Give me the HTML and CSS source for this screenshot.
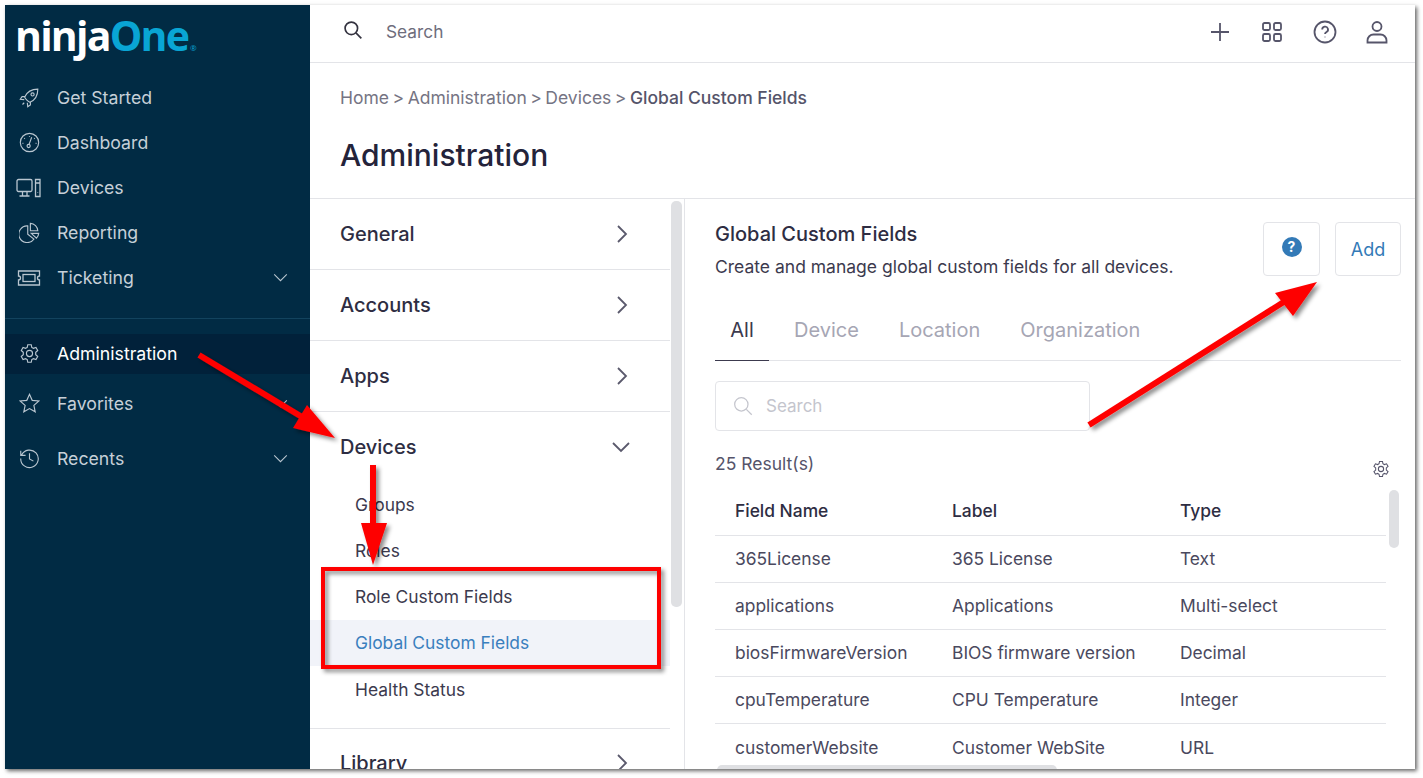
FILE: index.html
```html
<!DOCTYPE html>
<html lang="en">
<head>
    <meta charset="UTF-8">
    <title>Global Custom Fields</title>
    <link rel="stylesheet" href="styles.css">
</head>
<body>
    <div class="window">
        <aside class="sidebar">
            <div class="logo"><span class="logo-ninja">ninja</span><span class="logo-one">One</span><span class="logo-reg">®</span></div>
            <nav class="side-nav">
                <a class="side-item">
                    <svg class="side-icon" viewBox="0 0 24 24"><path d="M9 15c-1-1-2-2-2.500-3.500C9 6 14 2.500 21.500 2.500 21.500 10 18 15 12.500 17.500 11 17 10 16 9 15z"/><circle cx="15.500" cy="8.500" r="1.800"/><path d="M7 11H3.500L1.500 14l4.500.5M13 17v3.500l-3 2-.5-4.500M6 18l-2 2"/></svg>
                    <span>Get Started</span>
                </a>
                <a class="side-item">
                    <svg class="side-icon" viewBox="0 0 24 24"><circle cx="12" cy="12" r="10.500"/><circle cx="11" cy="16" r="1.800"/><path d="M11.500 14.200l3-8.200M12 4.500v1M6 7l.7.7M4 13h1M19 13h1M18 7l-.7.7"/></svg>
                    <span>Dashboard</span>
                </a>
                <a class="side-item">
                    <svg class="side-icon side-icon-wide" viewBox="0 0 26 20"><rect x="1" y="1.500" width="15" height="12" rx="1.500"/><path d="M6.500 13.500v4M11 13.500v4M3.500 18h10M19.500 1.500h4.500v17h-4.500zM19.500 5h4.500M21.700 14.500v.5"/></svg>
                    <span>Devices</span>
                </a>
                <a class="side-item">
                    <svg class="side-icon" viewBox="0 0 24 24"><path d="M10 4.500a9.500 9.500 0 1 0 7 15l-7-5.500z"/><path d="M13 1.500a9 9 0 0 1 8.500 8.500H13z"/><path d="M14 13h8.500a9 9 0 0 1-2.500 5.500z"/></svg>
                    <span>Reporting</span>
                </a>
                <a class="side-item">
                    <svg class="side-icon side-icon-wide" viewBox="0 0 26 20"><path d="M2.500 3h21v5a2 2 0 0 0 0 4v5h-21v-5a2 2 0 0 0 0-4z"/><rect x="7" y="6.500" width="12" height="7"/></svg>
                    <span>Ticketing</span>
                    <svg class="side-caret" viewBox="0 0 16 10"><path d="M1 1.500l7 7 7-7"/></svg>
                </a>
            </nav>
            <div class="side-divider"></div>
            <a class="side-item side-item-active">
                <svg class="side-icon" viewBox="0 0 24 24"><path d="M10 2h4l.6 3 1.900 1.100 2.900-1 2 3.500-2.300 2v2.800l2.300 2-2 3.500-2.900-1-1.900 1.100-.6 3h-4l-.6-3-1.900-1.100-2.900 1-2-3.500 2.300-2v-2.800l-2.300-2 2-3.500 2.900 1L9.400 5z"/><circle cx="12" cy="12" r="3.500"/></svg>
                <span>Administration</span>
            </a>
            <a class="side-item side-item-fav">
                <svg class="side-icon" viewBox="0 0 24 24"><path d="M12 1.500l3.100 6.900 7.400.8-5.500 5 1.500 7.300-6.500-3.700-6.500 3.700 1.500-7.300-5.500-5 7.400-.8z"/></svg>
                <span>Favorites</span>
                <svg class="side-caret" viewBox="0 0 16 10"><path d="M1 1.500l7 7 7-7"/></svg>
            </a>
            <a class="side-item side-item-recent">
                <svg class="side-icon" viewBox="0 0 24 24"><path d="M3 8A10 10 0 1 1 2 12M2 3V8.500H7.500M12 6V12.500l4.500 2.500"/></svg>
                <span>Recents</span>
                <svg class="side-caret" viewBox="0 0 16 10"><path d="M1 1.500l7 7 7-7"/></svg>
            </a>
        </aside>

        <main class="main">
            <header class="topbar">
                <svg class="top-search" viewBox="0 0 24 24"><circle cx="10" cy="10" r="7.500"/><path d="M15.500 15.500L22 22"/></svg>
                <span class="top-search-text">Search</span>
                <div class="top-icons">
                    <svg class="top-icon" viewBox="0 0 24 24"><path d="M12 3v18M3 12h18"/></svg>
                    <svg class="top-icon" viewBox="0 0 24 24"><rect x="3" y="3" width="7" height="7" rx="1.500"/><rect x="14" y="3" width="7" height="7" rx="1.500"/><rect x="3" y="14" width="7" height="7" rx="1.500"/><rect x="14" y="14" width="7" height="7" rx="1.500"/></svg>
                    <svg class="top-icon" viewBox="0 0 24 24"><circle cx="12" cy="12" r="10.500"/><path d="M9.200 9.500a2.900 2.900 0 1 1 4.300 2.500c-1 .6-1.500 1-1.500 2M12 16.800v.4"/></svg>
                    <svg class="top-icon" viewBox="0 0 24 24"><circle cx="12" cy="6.500" r="4.500"/><path d="M2.500 22.500v-2a6 6 0 0 1 6-6h7a6 6 0 0 1 6 6v2z"/></svg>
                </div>
            </header>

            <section class="page-head">
                <div class="crumbs">Home<span class="sep">&gt;</span>Administration<span class="sep">&gt;</span>Devices<span class="sep">&gt;</span><strong>Global Custom Fields</strong></div>
                <h1>Administration</h1>
            </section>

            <div class="columns">
                <div class="menu-col">
                    <div class="menu-list">
                        <div class="menu-row">General<svg class="chev" viewBox="0 0 12 20"><path d="M2 2l8 8-8 8"/></svg></div>
                        <div class="menu-row">Accounts<svg class="chev" viewBox="0 0 12 20"><path d="M2 2l8 8-8 8"/></svg></div>
                        <div class="menu-row">Apps<svg class="chev" viewBox="0 0 12 20"><path d="M2 2l8 8-8 8"/></svg></div>
                        <div class="menu-group">
                            <div class="menu-row menu-row-open">Devices<svg class="chev-down" viewBox="0 0 20 12"><path d="M2 2l8 8 8-8"/></svg></div>
                            <div class="sub-item">Groups</div>
                            <div class="sub-item">Roles</div>
                            <div class="sub-item">Role Custom Fields</div>
                            <div class="sub-item sub-item-active">Global Custom Fields</div>
                            <div class="sub-item">Health Status</div>
                        </div>
                        <div class="menu-row">Library<svg class="chev" viewBox="0 0 12 20"><path d="M2 2l8 8-8 8"/></svg></div>
                    </div>
                    <div class="menu-scroll"><div class="menu-thumb"></div></div>
                </div>

                <div class="detail">
                    <div class="detail-head">
                        <div>
                            <h2>Global Custom Fields</h2>
                            <p>Create and manage global custom fields for all devices.</p>
                        </div>
                        <div class="detail-btns">
                            <button class="btn btn-help"><span class="help-dot">?</span></button>
                            <button class="btn btn-add">Add</button>
                        </div>
                    </div>

                    <div class="tabs">
                        <div class="tab tab-active">All</div>
                        <div class="tab">Device</div>
                        <div class="tab">Location</div>
                        <div class="tab">Organization</div>
                    </div>

                    <div class="search-box">
                        <svg class="search-icon" viewBox="0 0 24 24"><circle cx="10" cy="10" r="8"/><path d="M16 16l6.500 6.500"/></svg>
                        <span>Search</span>
                    </div>

                    <div class="results">
                        <span>25 Result(s)</span>
                        <svg class="results-gear" viewBox="0 0 24 24"><path d="M10 2h4l.6 3 1.900 1.100 2.900-1 2 3.500-2.300 2v2.800l2.300 2-2 3.500-2.900-1-1.900 1.100-.6 3h-4l-.6-3-1.900-1.100-2.900 1-2-3.500 2.300-2v-2.800l-2.300-2 2-3.500 2.900 1L9.400 5z"/><circle cx="12" cy="12" r="3.500"/></svg>
                    </div>

                    <div class="table-wrap">
                        <table class="fields">
                            <thead>
                                <tr><th>Field Name</th><th>Label</th><th>Type</th></tr>
                            </thead>
                            <tbody>
                                <tr><td>365License</td><td>365 License</td><td>Text</td></tr>
                                <tr><td>applications</td><td>Applications</td><td>Multi-select</td></tr>
                                <tr><td>biosFirmwareVersion</td><td>BIOS firmware version</td><td>Decimal</td></tr>
                                <tr><td>cpuTemperature</td><td>CPU Temperature</td><td>Integer</td></tr>
                                <tr><td>customerWebsite</td><td>Customer WebSite</td><td>URL</td></tr>
                            </tbody>
                        </table>
                        <div class="table-vthumb"></div>
                        <div class="table-hthumb"></div>
                    </div>
                </div>
            </div>
        </main>
    </div>

    <svg class="notes" viewBox="0 0 1423 778">
        <defs>
            <filter id="drop" x="-20%" y="-20%" width="140%" height="140%">
                <feDropShadow dx="3" dy="3" stdDeviation="2" flood-color="#000" flood-opacity="0.45"/>
            </filter>
        </defs>
        <g filter="url(#drop)">
            <path class="note-line" d="M199 355L312 423"/>
            <path class="note-fill" d="M335 438L293 428 307 405z"/>
            <path class="note-line" d="M373 465V525"/>
            <path class="note-fill" d="M373 565L361 523H387z"/>
            <path class="note-line" d="M1089 425L1290 298"/>
            <path class="note-fill" d="M1317 282L1275 293 1293 316z"/>
            <rect class="note-box" x="323" y="569" width="336" height="98"/>
        </g>
    </svg>
</body>
</html>
```

FILE: styles.css
```css
body {
    margin: 0;
    background: #fff;
    font-family: Inter, "Liberation Sans", sans-serif;
    color: #3c3a4e;
    position: relative;
    height: 778px;
    overflow: hidden;
}
.window {
    position: relative;
    margin: 5px 0 0 5px;
    width: 1410px;
    height: 764px;
    display: flex;
    overflow: hidden;
    background: #fff;
    box-shadow: 2px 2px 4px rgba(0, 0, 0, 0.6);
}
.notes {
    position: absolute;
    left: 0;
    top: 0;
    width: 1423px;
    height: 778px;
}
.note-line {
    stroke: #fe0000;
    stroke-width: 6;
    fill: none;
}
.note-fill {
    fill: #fe0000;
}
.note-box {
    stroke: #fe0000;
    stroke-width: 4;
    fill: none;
}

/* sidebar */
.sidebar {
    width: 305px;
    flex-shrink: 0;
    background: #012b44;
    color: #c6d0d8;
    font-size: 17.700px;
}
.logo {
    height: 48px;
    padding: 6px 0 0 10px;
    font-family: "Open Sans", sans-serif;
    font-weight: 700;
    font-size: 41px;
    line-height: 48px;
    letter-spacing: -1.800px;
    white-space: nowrap;
}
.logo-ninja {
    color: #fff;
}
.logo-one {
    color: #09a5d4;
}
.logo-reg {
    color: #09a5d4;
    font-size: 8px;
    font-weight: 400;
    letter-spacing: 0;
    margin-left: 2px;
}
.side-nav {
    padding-top: 16px;
}
.side-item {
    display: flex;
    align-items: center;
    height: 45px;
    padding-left: 14px;
}
.side-icon {
    width: 21px;
    height: 21px;
    margin-right: 17px;
    fill: none;
    stroke: #b9c6d0;
    stroke-width: 1.300;
    flex-shrink: 0;
}
.side-icon-wide {
    width: 26px;
    height: 20px;
    margin-left: -3px;
    margin-right: 15px;
}
.side-caret {
    width: 15px;
    height: 9px;
    margin-left: auto;
    margin-right: 22px;
    fill: none;
    stroke: #b9c6d0;
    stroke-width: 1.200;
}
.side-divider {
    height: 1px;
    background: #12435e;
    margin-top: 18px;
}
.side-item-active {
    height: 39px;
    padding-bottom: 1px;
    margin-top: 15px;
    background: #01213a;
    color: #fff;
}
.side-item-fav {
    margin-top: 7px;
}
.side-item-recent {
    margin-top: 10px;
}

/* top */
.main {
    flex: 1;
    min-width: 0;
    display: flex;
    flex-direction: column;
}
.topbar {
    height: 53px;
    flex-shrink: 0;
    display: flex;
    align-items: center;
    padding: 0 26px 4px 33px;
    border-bottom: 1px solid #e3e4e8;
}
.top-search {
    width: 20px;
    height: 20px;
    margin-top: -3px;
    fill: none;
    stroke: #33323f;
    stroke-width: 2;
}
.top-search-text {
    margin-left: 23px;
    font-size: 17.300px;
    color: #6e6d7c;
}
.top-icons {
    margin-left: auto;
    display: flex;
    gap: 28.500px;
}
.top-icon {
    width: 24px;
    height: 24px;
    fill: none;
    stroke: #56556a;
    stroke-width: 1.800;
}
.page-head {
    height: 136px;
    flex-shrink: 0;
    padding-left: 30px;
    border-bottom: 1px solid #e3e4e8;
    box-sizing: border-box;
}
.crumbs {
    padding-top: 24px;
    font-size: 17.500px;
    line-height: 22px;
    color: #757483;
}
.crumbs strong {
    font-weight: 500;
    color: #55546a;
}
.sep {
    margin: 0 3.500px;
}
h1 {
    margin: 26px 0 0;
    font-size: 30px;
    line-height: 40px;
    font-weight: 500;
    color: #24233a;
}

/* columns */
.columns {
    flex: 1;
    display: flex;
    min-height: 0;
}
.menu-col {
    width: 374px;
    flex-shrink: 0;
    display: flex;
    border-right: 1px solid #e3e4e8;
}
.menu-list {
    width: 360px;
    flex-shrink: 0;
}
.menu-row {
    height: 70px;
    display: flex;
    align-items: center;
    justify-content: space-between;
    padding: 0 42px 0 30px;
    border-bottom: 1px solid #e3e4e8;
    font-size: 20px;
    font-weight: 500;
    color: #2e2d42;
}
.menu-row-open {
    border-bottom: 0;
    padding-right: 39px;
    height: 70px;
}
.menu-group + .menu-row {
    height: 68px;
}
.chev {
    width: 12px;
    height: 20px;
    fill: none;
    stroke: #5a596c;
    stroke-width: 1.800;
}
.chev-down {
    width: 20px;
    height: 12px;
    fill: none;
    stroke: #5a596c;
    stroke-width: 1.800;
}
.menu-group {
    border-bottom: 1px solid #e3e4e8;
    padding-bottom: 15px;
}
.sub-item {
    height: 45px;
    padding-bottom: 1px;
    display: flex;
    align-items: center;
    padding-left: 45px;
    font-size: 17.400px;
    color: #3c3a4e;
}
.sub-item:last-child {
    height: 47px;
    padding-bottom: 0;
}
.sub-item-active {
    background: #f1f3f9;
    color: #3a7fbe;
}
.menu-scroll {
    width: 14px;
    padding: 2px 2px 0 1px;
    box-sizing: border-box;
}
.menu-thumb {
    width: 11px;
    height: 406px;
    background: #dfe0e3;
    border-radius: 5px;
}

/* right side */
.detail {
    flex: 1;
    min-width: 0;
    padding: 23px 14px 0 30px;
}
.detail-head {
    display: flex;
    justify-content: space-between;
    height: 101px;
}
h2 {
    margin: 0;
    font-size: 20px;
    line-height: 24px;
    font-weight: 500;
    color: #2e2d42;
}
.detail-head p {
    margin: 10px 0 0;
    font-size: 17.500px;
    line-height: 22px;
    color: #3c3a4e;
}
.detail-btns {
    display: flex;
    gap: 15px;
    height: 54px;
}
.btn {
    height: 54px;
    background: #fff;
    border: 1px solid #e3e4e8;
    border-radius: 4px;
    padding: 0;
    font-family: inherit;
}
.btn-help {
    width: 57px;
}
.help-dot {
    display: inline-block;
    width: 20px;
    height: 20px;
    line-height: 20px;
    border-radius: 50%;
    background: #337ab7;
    color: #fff;
    font-size: 14px;
    font-weight: 700;
    margin-top: -6px;
    vertical-align: middle;
}
.btn-add {
    width: 66px;
    font-size: 18px;
    color: #337ab7;
}
.tabs {
    display: flex;
    gap: 40px;
    height: 37px;
    border-bottom: 1px solid #e3e4e8;
    font-size: 20px;
    color: #a6a6b4;
}
.tab {
    line-height: 14px;
    height: 37px;
}
.tab-active {
    width: 54px;
    text-align: center;
    margin-right: -15px;
    color: #3c3a4e;
    border-bottom: 1px solid #3c3a4e;
}
.search-box {
    width: 375px;
    height: 50px;
    margin-top: 20px;
    box-sizing: border-box;
    border: 1px solid #e3e4e8;
    border-radius: 4px;
    display: flex;
    align-items: center;
    padding-left: 17px;
    font-size: 17px;
    color: #c4c5cd;
}
.search-icon {
    width: 20px;
    height: 20px;
    margin-right: 13px;
    fill: none;
    stroke: #c4c5cd;
    stroke-width: 1.500;
}
.results {
    display: flex;
    justify-content: space-between;
    align-items: flex-end;
    height: 43px;
    padding-right: 11px;
    font-size: 17.500px;
    color: #55546a;
}
.results-gear {
    width: 18px;
    height: 18px;
    fill: none;
    stroke: #55546a;
    stroke-width: 1.400;
    margin-bottom: -4px;
}
.table-wrap {
    position: relative;
    margin-top: 13px;
}
.fields {
    width: 671px;
    border-collapse: collapse;
    table-layout: fixed;
    font-size: 17.400px;
}
.fields th:nth-child(1) {
    width: 197px;
}
.fields th:nth-child(2) {
    width: 208px;
}
.fields th, .fields td {
    padding: 0 0 0 20px;
    text-align: left;
    white-space: nowrap;
    border-bottom: 1px solid #e3e4e8;
}
.fields th {
    height: 46px;
    padding-bottom: 2px;
    font-weight: 500;
    color: #2e2d42;
}
.fields td {
    height: 44px;
    padding-bottom: 2px;
    color: #4a495e;
}
.fields tr:last-child td {
    height: 46px;
    padding-bottom: 0;
}
.table-vthumb {
    position: absolute;
    right: 2px;
    top: 3px;
    width: 10px;
    height: 58px;
    border-radius: 5px;
    background: #dfe0e3;
}
.table-hthumb {
    position: absolute;
    left: 2px;
    top: 278px;
    width: 340px;
    height: 6px;
    border-radius: 5px 5px 0 0;
    background: #dfe0e3;
}
```
